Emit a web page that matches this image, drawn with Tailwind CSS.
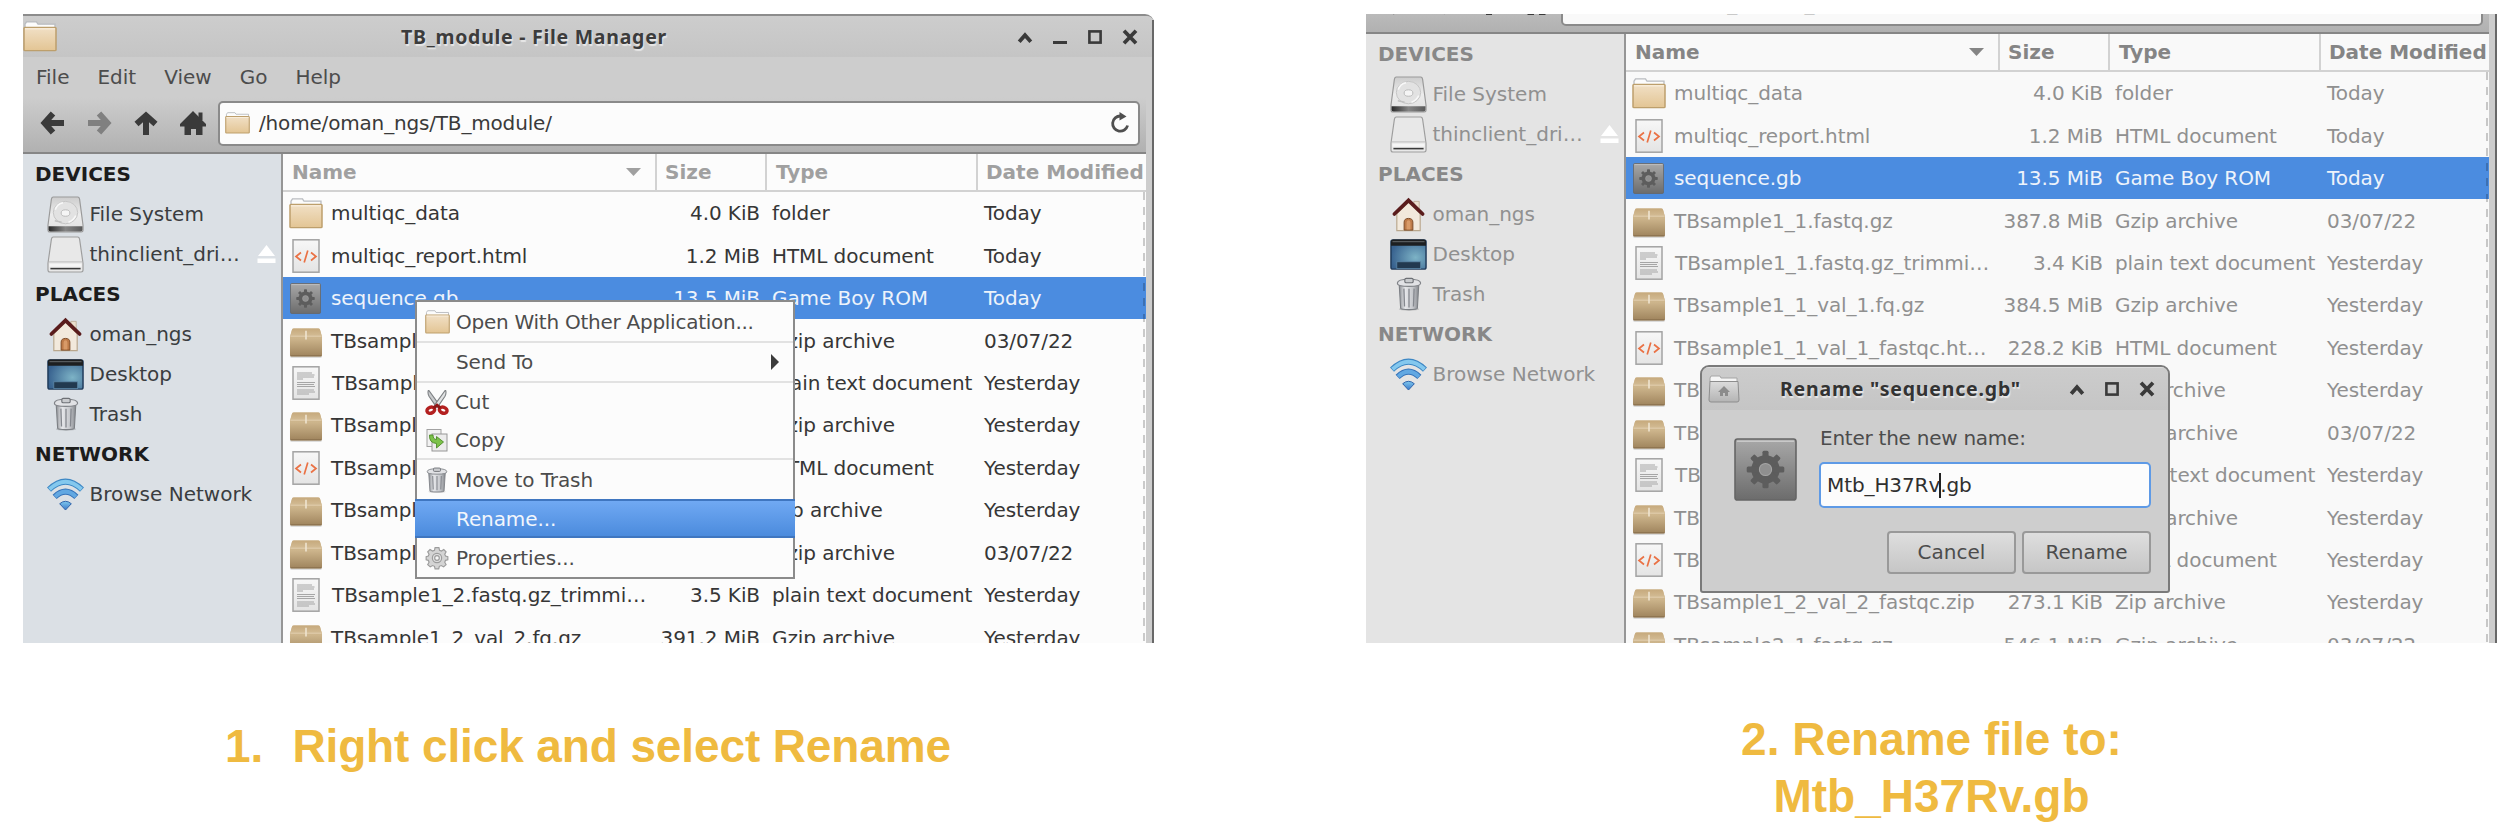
<!DOCTYPE html>
<html lang="en">
<head>
<meta charset="utf-8">
<title>Rename a file</title>
<script src="https://cdn.jsdelivr.net/npm/@tailwindcss/browser@4"></script>
</head>
<body class="bg-white w-[2498px] h-[828px] overflow-hidden">

<svg class="absolute w-0 h-0" aria-hidden="true">
  <defs>
    <linearGradient id="g-folder" x1="0" y1="0" x2="0" y2="1"><stop offset="0" stop-color="#f1e0c6"/><stop offset="1" stop-color="#e3c594"/></linearGradient>
    <linearGradient id="g-box" x1="0" y1="0" x2="0" y2="1"><stop offset="0" stop-color="#cfb78e"/><stop offset=".35" stop-color="#cdb58c"/><stop offset="1" stop-color="#9e835c"/></linearGradient>
    <linearGradient id="g-lid" x1="0" y1="0" x2="0" y2="1"><stop offset="0" stop-color="#c6a97c"/><stop offset="1" stop-color="#d3bc95"/></linearGradient>
    <linearGradient id="g-metal" x1="0" y1="0" x2="0" y2="1"><stop offset="0" stop-color="#a8a8a8"/><stop offset="1" stop-color="#6c6c6c"/></linearGradient>
    <linearGradient id="g-page" x1="0" y1="0" x2="0" y2="1"><stop offset="0" stop-color="#f7f7f7"/><stop offset="1" stop-color="#e4e4e4"/></linearGradient>
    <linearGradient id="g-drive" x1="0" y1="0" x2="0" y2="1"><stop offset="0" stop-color="#cdcdcd"/><stop offset=".5" stop-color="#ececec"/><stop offset="1" stop-color="#e0e0e0"/></linearGradient>
    <linearGradient id="g-driveface" x1="0" y1="0" x2="1" y2="0"><stop offset="0" stop-color="#2a2a2a"/><stop offset=".5" stop-color="#858585"/><stop offset="1" stop-color="#5a5a5a"/></linearGradient>
    <radialGradient id="g-desk" cx=".7" cy=".6" r=".7"><stop offset="0" stop-color="#7db3c6"/><stop offset="1" stop-color="#38628f"/></radialGradient>
    <linearGradient id="g-can" x1="0" y1="0" x2="1" y2="0"><stop offset="0" stop-color="#8f9297"/><stop offset=".3" stop-color="#e6e7ea"/><stop offset=".7" stop-color="#c5c7cb"/><stop offset="1" stop-color="#85888d"/></linearGradient>
    <linearGradient id="g-wifi" x1="0" y1="0" x2="0" y2="1"><stop offset="0" stop-color="#7fc8ee"/><stop offset="1" stop-color="#3a78c8"/></linearGradient>
    <linearGradient id="g-grey" x1="0" y1="0" x2="0" y2="1"><stop offset="0" stop-color="#dcdcdc"/><stop offset="1" stop-color="#b4b4b4"/></linearGradient>

    <symbol id="folder" viewBox="0 0 34 34" preserveAspectRatio="none">
      <path d="M2 9V3.500L3.500 1h10L15 3.500h17V9z" fill="#fcfcfc" stroke="#b9bcc0" stroke-width="1.300"/>
      <rect x="1" y="7" width="32" height="25.500" rx="1" fill="url(#g-folder)" stroke="#bd9f6c" stroke-width="1.500"/>
      <path d="M2 8.600h30" stroke="#f9efdf" stroke-width="1.200"/>
    </symbol>
    <symbol id="homefolder" viewBox="0 0 32 28">
      <path d="M2 7V3L3 1h9l1 2h16v5z" fill="#f5f5f5" stroke="#a5a5a5"/>
      <path d="M2 6.500h28L31 25q0 2-2 2H3q-2 0-2-2z" fill="url(#g-grey)" stroke="#8d8d8d"/>
      <path d="M16 11l6 6h-2v4h-3v-3h-2v3h-3v-4h-2z" fill="#8c8c8c"/>
    </symbol>
    <symbol id="html" viewBox="0 0 34 34">
      <rect x="4" y=".8" width="26" height="32.400" fill="url(#g-page)" stroke="#a3a3a3" stroke-width="1.500"/>
      <path d="M12 13.500l-5 4 5 4M22 13.500l5 4-5 4M18.800 11.500l-3.600 12" fill="none" stroke="#ea7144" stroke-width="1.700"/>
    </symbol>
    <symbol id="text" viewBox="0 0 34 34">
      <rect x="4" y=".8" width="26" height="32.400" fill="url(#g-page)" stroke="#a3a3a3" stroke-width="1.500"/>
      <path d="M8 7h15M8 9h17.500M8 11h17M8 13h6M8 16.500h18M8 18.500h17M8 20.500h18M8 24h17M8 26h18M8 28h12" stroke="#a6a6a6" stroke-width="1.100"/>
    </symbol>
    <symbol id="gear" viewBox="0 0 62 62" preserveAspectRatio="none">
      <rect x="1" y="1" width="60" height="60" rx="2.500" fill="url(#g-metal)" stroke="#666" stroke-width="1.600"/>
      <path d="M3 3.200h56" stroke="#c9c9c9" stroke-width="1.400"/>
      <g fill="#5d5d5d">
        <circle cx="31" cy="31" r="14"/>
        <rect x="28" y="12.500" width="6" height="37" rx="1.500"/><rect x="28" y="12.500" width="6" height="37" rx="1.500" transform="rotate(45 31 31)"/><rect x="28" y="12.500" width="6" height="37" rx="1.500" transform="rotate(90 31 31)"/><rect x="28" y="12.500" width="6" height="37" rx="1.500" transform="rotate(135 31 31)"/>
      </g>
      <circle cx="31" cy="31" r="6" fill="#8f8f8f" stroke="#a5a5a5" stroke-width="1"/>
    </symbol>
    <symbol id="box" viewBox="0 0 34 34">
      <rect x=".5" y="30" width="33" height="3" rx="1.500" fill="#000" opacity=".12"/>
      <path d="M4.500 2.500h25q1.500 0 2 1.500L33.500 11V30q0 1.500-1.500 1.500H2Q.5 31.500.5 30V11L2.500 4q.5-1.500 2-1.500z" fill="url(#g-box)"/>
      <path d="M4.500 2.500h25q1.500 0 2 1.500l1.800 6.500H.7L2.500 4q.5-1.500 2-1.500z" fill="url(#g-lid)"/>
      <path d="M1 10.500h32" stroke="#e2d0b0" stroke-width="1"/>
      <path d="M17 5v9" stroke="#f0e6d2" stroke-width="1.600"/>
      <path d="M1 30.600h32" stroke="#8d7350" stroke-width="1.200"/>
    </symbol>
    <symbol id="drive" viewBox="0 0 38 38">
      <path d="M4.500 3.500q.3-2.500 2-2.500h25q1.700 0 2 2.500L37 30v5q0 2-2 2H3q-2 0-2-2v-5z" fill="url(#g-drive)" stroke="#9a9a9a" stroke-width="1.200"/>
      <path d="M1.600 31h34.800v3.500q0 2-2 2H3.600q-2 0-2-2z" fill="url(#g-driveface)"/>
      <ellipse cx="19" cy="17" rx="12.500" ry="11.500" fill="#e2e2e2" stroke="#c4c4c4"/>
      <path d="M8.500 14q2-6 8-7M29.500 20q-2 5-7.500 7" fill="none" stroke="#f8f8f8" stroke-width="1.600"/>
      <ellipse cx="19" cy="17.500" rx="4.500" ry="3.300" fill="#f5f5f5" stroke="#b9b9b9"/>
      <path d="M8 25.500l7 1.500" stroke="#c0c0c0" stroke-width="1.600"/>
    </symbol>
    <symbol id="usb" viewBox="0 0 38 38">
      <path d="M4.500 3.500q.3-2.500 2-2.500h25q1.700 0 2 2.500L37 28v7q0 2-2 2H3q-2 0-2-2v-7z" fill="#e8e8e8" stroke="#9e9e9e" stroke-width="1.200"/>
      <path d="M2 26.500h34" stroke="#c6c6c6" stroke-width="1.200"/>
      <path d="M2.500 28.500h33v3h-33z" fill="#f6f6f6"/>
      <path d="M3.500 33.500h31" stroke="#3a3a3a" stroke-width="1.600"/>
    </symbol>
    <symbol id="eject" viewBox="0 0 19 19"><path d="M9.500 0L18 11H1zM.5 13.500h18v4.500H.5z" fill="#fff"/></symbol>
    <symbol id="house" viewBox="0 0 36 38">
      <path d="M23.500 5.500h5.500V16h-5.500z" fill="#eadfce" stroke="#b7a68e" stroke-width=".8"/>
      <path d="M6 18L18 6.500 30 18v17.500H6z" fill="#f2e9dc" stroke="#b9a78d" stroke-width="1.200"/>
      <path d="M3.500 18.500L18 4.500l14.500 14" fill="none" stroke="#5a1c1c" stroke-width="3.800" stroke-linecap="round"/>
      <path d="M13.500 35V27q0-4 4.500-4t4.500 4v8z" fill="#bd7a48" stroke="#7c4a26"/>
      <path d="M16 34.500v-7q0-2.500 2-2.500t2 2.500v7z" fill="#d89a68"/>
    </symbol>
    <symbol id="desktop" viewBox="0 0 38 38">
      <rect x="1" y="4" width="36" height="30" rx="2" fill="url(#g-desk)" stroke="#1f3a5a" stroke-width="1.500"/>
      <path d="M1 6q0-2.500 2.500-2.500h31Q37 3.500 37 6v4H1z" fill="#1d1f20"/>
      <path d="M2.500 5.800h33" stroke="#565a5c" stroke-width="1.200"/>
      <rect x="7" y="26.500" width="24.500" height="7" fill="#22394f" stroke="#5d87a8" stroke-width=".8"/>
    </symbol>
    <symbol id="trash" viewBox="0 0 28 38" preserveAspectRatio="none">
      <ellipse cx="14" cy="36" rx="11" ry="1.800" fill="#000" opacity=".15"/>
      <path d="M3.500 9h21L23 35q0 1.500-9 1.500T5 35z" fill="url(#g-can)" stroke="#7d8085" stroke-width="1.200"/>
      <path d="M8.500 13l.7 20M14 13v21M19.500 13l-.7 20" stroke="#85888e" stroke-width="1.400"/>
      <path d="M1.500 7Q1.500 2.500 14 2.500T26.500 7q0 3.500-12.500 3.500T1.500 7z" fill="#e1e2e5" stroke="#808388" stroke-width="1.200"/>
      <rect x="9.500" y="1.500" width="9" height="5" rx="1.500" fill="#c9cbce" stroke="#6d7075" stroke-width="1.200"/>
    </symbol>
    <symbol id="wifi" viewBox="0 0 38 34">
      <g fill="none">
        <path d="M2 12Q19-4.500 36 12" stroke="#3d87c4" stroke-width="6"/>
        <path d="M2.500 11.600Q19-4 35.500 11.600" stroke="#84c8ee" stroke-width="4"/>
        <path d="M7.800 19.500Q19 8.500 30.200 19.500" stroke="#3572b8" stroke-width="6"/>
        <path d="M8.300 19.100Q19 9 29.700 19.100" stroke="#62a8e2" stroke-width="4"/>
      </g>
      <path d="M13 26.500q6-5 12 0l-6 6.500z" fill="url(#g-wifi)" stroke="#2e62a8"/>
    </symbol>
    <symbol id="cut" viewBox="0 0 24 24" preserveAspectRatio="none">
      <path d="M3.500 0q-1.200 3 .5 6l7.500 10.500 3-2z" fill="#c9cbcd" stroke="#7d8083" stroke-width="1.100"/>
      <path d="M20.500 0q1.200 3-.5 6l-7.500 10.500-3-2z" fill="#e2e3e4" stroke="#7d8083" stroke-width="1.100"/>
      <g fill="none" stroke="#b32020" stroke-width="3.400"><ellipse cx="5.800" cy="19.300" rx="3.900" ry="2.800" transform="rotate(-18 6 19.300)"/><ellipse cx="18.200" cy="19.300" rx="3.900" ry="2.800" transform="rotate(18 18 19.300)"/></g>
      <path d="M8.500 17.500l3.500-3 3.500 3" fill="none" stroke="#8f1717" stroke-width="2.800"/>
    </symbol>
    <symbol id="copy" viewBox="0 0 24 24">
      <rect x="2" y="1.500" width="14" height="17" fill="#f2f2f2" stroke="#a2a2a2"/>
      <rect x="7" y="6" width="15" height="17" fill="#ececec" stroke="#969696"/>
      <path d="M4.500 7q-.5 8 7 8.500v4.500l7-6-7-5.500v3Q8 11.500 8 7z" fill="#7cc24a" stroke="#4c8a26" stroke-width=".9"/>
    </symbol>
    <symbol id="cog" viewBox="0 0 62 62">
      <g fill="#d4d4d4" stroke="#9c9c9c" stroke-width="3">
        <path d="M26 4h10l1.500 7 5 2 6-4 6 6-3.500 6.500 2 4.500 6 1.500v8l-6 1.500-2 5 3.500 6-6.500 6-6-3.500-5 2-1.500 6.500H26l-1.500-6.500-5-2-6 3.500-6.500-6 3.500-6-2-5L3 35.500v-8L8.500 26l2-4.500L7 15l6-6 6.500 4 5-2z"/>
        <circle cx="31" cy="31" r="12" fill="#e2e2e2"/><circle cx="31" cy="31" r="6" fill="#f7f7f7"/>
      </g>
    </symbol>

    <symbol id="left" viewBox="0 0 24 24"><path d="M13 2.500L4.500 12l8.500 9.500M5 12h19" fill="none" stroke="currentColor" stroke-width="6"/></symbol>
    <symbol id="home" viewBox="0 0 26 24"><path d="M13 0L26 13v2.500h-3.500V24H16v-6h-5v6H4.500v-8.500H0V13z" fill="currentColor"/><path d="M18.500 1.500h4V9h-4z" fill="currentColor"/></symbol>
    <symbol id="reload" viewBox="0 0 20 22"><path d="M10.500 4A7.600 7.600 0 1 0 17.600 13.500" fill="none" stroke="#4f4f4f" stroke-width="2.800"/><path d="M9.500 0v8.500l7-4z" fill="#4f4f4f"/></symbol>
    <symbol id="w-shade" viewBox="0 0 16 16"><path d="M2.200 12.800L8 6.200l5.800 6.600" fill="none" stroke="#3a3a3a" stroke-width="3.800"/></symbol>
    <symbol id="w-min" viewBox="0 0 16 16"><path d="M1 13.500h14" stroke="#3a3a3a" stroke-width="3"/></symbol>
    <symbol id="w-max" viewBox="0 0 16 16"><rect x="2.400" y="2.400" width="11.200" height="11.200" fill="none" stroke="#3a3a3a" stroke-width="2.600"/></symbol>
    <symbol id="w-close" viewBox="0 0 16 16"><path d="M2 1.800l12 12.400M14 1.800L2 14.200" stroke="#3a3a3a" stroke-width="3.800"/></symbol>
  </defs>
</svg>

<main class="relative flex pt-[14px] pl-[23px] gap-[212px] font-['DejaVu_Sans','Liberation_Sans',sans-serif] text-[20px] leading-6 whitespace-nowrap">

  <div class="w-[1131px] shrink-0">
    <div class="relative h-[629px] overflow-hidden">
      <div data-window="active"></div>

      <!-- context menu -->
      <div class="absolute left-[392px] top-[286px] w-[380px] h-[279px] bg-[#fcfcfc] border-2 border-[#8b8b8b] text-[#4c4c4c] tracking-[-0.1px]">
        <div class="h-[41px] flex items-center pl-[8px] gap-[6px] border-b-2 border-[#e2e2e2] tracking-[-0.260px]"><svg class="w-[25px] h-[24px]"><use href="#folder"/></svg>Open With Other Application...</div>
        <div class="h-[40px] flex items-center justify-between pl-[39px] pr-[14px] border-b-2 border-[#e2e2e2]">Send To<svg class="w-[8px] h-[16px]" viewBox="0 0 8 16"><path d="M0 0l8 8-8 8z" fill="#3c3c3c"/></svg></div>
        <div class="h-[38px] flex items-center pl-[8px] gap-[6px]"><svg class="w-[24px] h-[25px]"><use href="#cut"/></svg>Cut</div>
        <div class="h-[39px] flex items-center pl-[8px] gap-[6px] border-b-2 border-[#e2e2e2]"><svg class="w-[24px] h-[24px]"><use href="#copy"/></svg>Copy</div>
        <div class="h-[39px] flex items-center pl-[9px] gap-[7px]"><svg class="w-[22px] h-[26px]"><use href="#trash"/></svg>Move to Trash</div>
        <div class="h-[39px] -mx-[2px] flex items-center pl-[41px] bg-linear-to-b from-[#70a9f3] to-[#4b8bdd] border-y-2 border-[#3f76c0] text-[#f2f6fc]">Rename...</div>
        <div class="h-[39px] flex items-center pl-[8px] gap-[7px]"><svg class="w-[24px] h-[24px]"><use href="#cog"/></svg>Properties...</div>
      </div>
    </div>
    <p class="mt-[74px] ml-[202px] flex gap-[29px] font-['Liberation_Sans',Arial,sans-serif] font-bold text-[46px] leading-[58px] text-[#efba40]"><span>1.</span><span class="tracking-[-0.120px]">Right click and select Rename</span></p>
  </div>

  <div class="w-[1131px] shrink-0">
    <div class="relative h-[629px] overflow-hidden">
      <div class="-mt-[120px]" data-window="inactive"></div>

      <!-- rename dialog -->
      <div class="absolute left-[334px] top-[351px] w-[470px] h-[228px] bg-[#cecece] border-2 border-[#7a7a7a] rounded-t-[9px] rounded-b-[3px] overflow-hidden">
        <div class="h-[43px] flex items-center pl-[6px] pr-[13px] bg-linear-to-b from-[#cccccc] to-[#c5c5c5] border-t border-[#dedede]">
          <svg class="w-[32px] h-[28px]"><use href="#homefolder"/></svg>
          <div class="ml-[40px] font-['Noto_Sans',sans-serif] font-bold text-[19.500px] tracking-[0.800px] text-[#333] [text-shadow:1px_2px_1px_#e8e8e8]">Rename "sequence.gb"</div>
          <div class="ml-auto flex gap-[19px]">
            <svg class="w-4 h-4"><use href="#w-shade"/></svg>
            <svg class="w-4 h-4"><use href="#w-max"/></svg>
            <svg class="w-4 h-4"><use href="#w-close"/></svg>
          </div>
        </div>
        <div class="flex pl-[32px] pr-[17px] pt-[16px]">
          <svg class="mt-[12px] w-[63px] h-[63px] shrink-0"><use href="#gear"/></svg>
          <div class="ml-[22px] flex-1 text-[#4c4c4c]">
            <div class="pl-px tracking-[-0.250px]">Enter the new name:</div>
            <div class="mt-[12px] h-[46px] flex items-center pl-[6px] bg-[#fcfcfc] border-2 border-[#5e9ae6] rounded-[5px] text-[#2f2f2f] tracking-[-0.100px]">Mtb_H37Rv<span class="-mx-px w-[2px] h-[25px] bg-[#222]"></span>.gb</div>
            <div class="mt-[23px] flex justify-end gap-[6px]">
              <div class="w-[129px] h-[43px] flex items-center justify-center pb-[2px] rounded-[4px] border-2 border-[#999] bg-linear-to-b from-[#dedede] to-[#c6c6c6]">Cancel</div>
              <div class="w-[129px] h-[43px] flex items-center justify-center pb-[2px] rounded-[4px] border-2 border-[#999] bg-linear-to-b from-[#dedede] to-[#c6c6c6]">Rename</div>
            </div>
          </div>
        </div>
      </div>
    </div>
    <p class="mt-[68px] text-center font-['Liberation_Sans',Arial,sans-serif] font-bold text-[46px] leading-[57px] text-[#efba40]">2. Rename file to:<br>Mtb_H37Rv.gb</p>
  </div>
</main>

<script>
const files = [
  ['folder', 'multiqc_data', '4.0 KiB', 'folder', 'Today'],
  ['html', 'multiqc_report.html', '1.2 MiB', 'HTML document', 'Today'],
  ['gear', 'sequence.gb', '13.5 MiB', 'Game Boy ROM', 'Today'],
  ['box', 'TBsample1_1.fastq.gz', '387.8 MiB', 'Gzip archive', '03/07/22'],
  ['text', 'TBsample1_1.fastq.gz_trimmi…', '3.4 KiB', 'plain text document', 'Yesterday'],
  ['box', 'TBsample1_1_val_1.fq.gz', '384.5 MiB', 'Gzip archive', 'Yesterday'],
  ['html', 'TBsample1_1_val_1_fastqc.ht…', '228.2 KiB', 'HTML document', 'Yesterday'],
  ['box', 'TBsample1_1_val_1_fastqc.zip', '273.1 KiB', 'Zip archive', 'Yesterday'],
  ['box', 'TBsample1_2.fastq.gz', '391.2 MiB', 'Gzip archive', '03/07/22'],
  ['text', 'TBsample1_2.fastq.gz_trimmi…', '3.5 KiB', 'plain text document', 'Yesterday'],
  ['box', 'TBsample1_2_val_2.fq.gz', '391.2 MiB', 'Gzip archive', 'Yesterday'],
  ['html', 'TBsample1_2_val_2_fastqc.ht…', '228.2 KiB', 'HTML document', 'Yesterday'],
  ['box', 'TBsample1_2_val_2_fastqc.zip', '273.1 KiB', 'Zip archive', 'Yesterday'],
  ['box', 'TBsample2_1.fastq.gz', '546.1 MiB', 'Gzip archive', '03/07/22'],
];
const places = [
  [null, 'DEVICES'], ['drive', 'File System'], ['usb', 'thinclient_dri…'],
  [null, 'PLACES'], ['house', 'oman_ngs'], ['desktop', 'Desktop'], ['trash', 'Trash'],
  [null, 'NETWORK'], ['wifi', 'Browse Network'],
];
const iconSize = {
  folder: 'w-[34px] h-[31px]', html: 'w-[34px] h-[34px]', text: 'w-[34px] h-[34px]',
  gear: 'w-[31px] h-[31px] mx-[1.500px]', box: 'w-[34px] h-[33px] mt-[3px]',
};
const placeSize = { trash: 'w-[26px] h-[34px] mx-[5.500px]', wifi: 'w-[37px] h-[33px]' };

function row([icon, name, size, type, date], theme) {
  const selected = icon === 'gear';
  return `<div class="h-[42.450px] flex items-center tracking-[-0.080px] ${selected ? 'bg-[#4b8ce0] text-[#edf3fb]' : theme.row}">
    <div class="w-[42px] pl-[5.500px] flex items-center"><svg class="${iconSize[icon]}"><use href="#${icon}"/></svg></div>
    <div class="w-[331px] pl-[6px]">${icon === 'text' ? '<span class="pl-px">' + name + '</span>' : name}</div>
    <div class="w-[104px] flex justify-end">${size}</div>
    <div class="w-[212px] pl-[12px]">${type}</div>
    <div class="pl-[12px]">${date}</div>
  </div>`;
}
function place([icon, label], theme) {
  if (!icon) return `<div class="h-10 flex items-center pl-[12px] font-bold ${theme.heading}">${label}</div>`;
  return `<div class="h-10 flex items-center pl-[24px] pr-[5px] gap-[5.500px] ${theme.place}">
    <svg class="${placeSize[icon] || 'w-[37px] h-[37px]'}"><use href="#${icon}"/></svg>${label}
    ${icon === 'usb' ? '<svg class="ml-auto w-[19px] h-[19px]"><use href="#eject"/></svg>' : ''}</div>`;
}
function fileManager(theme) {
  return `<div class="relative h-[749px] pr-[8px] bg-[#cdcdcd] border-t-2 border-t-[#8c8c8c] rounded-tr-[9px]">
    <div class="h-[41px] -mr-[8px] pr-[16px] flex items-center bg-linear-to-b from-[#cdcdcd] to-[#c5c5c5] rounded-tr-[7px]">
      <svg class="w-[34px] h-[31px]"><use href="#folder"/></svg>
      <div class="ml-[344px] font-['Noto_Sans',sans-serif] font-bold text-[19.500px] tracking-[0.730px] text-[#3c3c3c] [text-shadow:1px_2px_1px_#e8e8e8]">TB_module - File Manager</div>
      <div class="ml-auto flex gap-[19px]">
        <svg class="w-4 h-4"><use href="#w-shade"/></svg><svg class="w-4 h-4"><use href="#w-min"/></svg>
        <svg class="w-4 h-4"><use href="#w-max"/></svg><svg class="w-4 h-4"><use href="#w-close"/></svg>
      </div>
    </div>
    <div class="h-[40px] flex items-center gap-[28px] pl-[13px] text-[#4c4c4c]"><span>File</span><span>Edit</span><span>View</span><span>Go</span><span>Help</span></div>
    <div class="h-[57px] flex items-center pl-[17px] pr-[6px] pb-[3px] bg-linear-to-b from-[#cdcdcd] to-[#b1b1b1] border-b-2 border-[#868686] text-[#3a3a3a]">
      <svg class="w-[24px] h-[24px]"><use href="#left"/></svg>
      <svg class="ml-[24px] w-[24px] h-[24px] rotate-180 text-[#808080]"><use href="#left"/></svg>
      <svg class="ml-[22px] w-[24px] h-[24px] rotate-90"><use href="#left"/></svg>
      <svg class="ml-[22px] w-[26px] h-[24px]"><use href="#home"/></svg>
      <div class="ml-[12px] h-[45px] flex-1 flex items-center pl-[5px] pr-[8px] rounded-[5px] border-2 border-[#8a8a8a] ${theme.entry}">
        <svg class="w-[25px] h-[22px]"><use href="#folder"/></svg>
        <span class="ml-[9px] tracking-[-0.170px]">/home/oman_ngs/TB_module/</span>
        <svg class="ml-auto w-[20px] h-[22px]"><use href="#reload"/></svg>
      </div>
    </div>
    <div class="h-[609px] flex overflow-hidden">
      <div class="w-[260px] shrink-0 border-r-2 border-[#969696] ${theme.sidebar}">${places.map(p => place(p, theme)).join('')}</div>
      <div class="relative flex-1 overflow-hidden ${theme.list}">
        <div class="h-[38px] flex items-center border-b-2 border-[#d2d2d2] font-bold ${theme.header}">
          <div class="w-[374px] h-full flex items-center justify-between pl-[9px] pr-[14px] border-r-2 border-[#d2d2d2]">Name<svg class="w-[15px] h-[8px]" viewBox="0 0 15 8"><path d="M0 0h15L7.500 8z" fill="currentColor"/></svg></div>
          <div class="w-[110px] h-full flex items-center pl-[8px] border-r-2 border-[#d2d2d2]">Size</div>
          <div class="w-[211px] h-full flex items-center pl-[9px] border-r-2 border-[#d2d2d2]">Type</div>
          <div class="pl-[8px]">Date Modified</div>
        </div>
        ${files.map(f => row(f, theme)).join('')}
        <div class="absolute right-[1px] top-[38px] bottom-0 w-[2px] bg-[repeating-linear-gradient(to_bottom,rgba(0,0,0,0.2)_0_8px,transparent_8px_15.200px)]"></div>
      </div>
    </div>
    <div class="absolute right-0 top-[4px] bottom-0 w-[2px] bg-[#686868]"></div>
  </div>`;
}
const themes = {
  active: { row: 'text-[#363636]', heading: 'text-[#1c1c1c]', place: 'text-[#3a3d40]', sidebar: 'bg-[#dbe0e5]', list: 'bg-[#fcfcfc]', header: 'text-[#a0a0a0]', entry: 'bg-[#fcfcfc]' },
  inactive: { row: 'text-[#909090]', heading: 'text-[#888888]', place: 'text-[#909090]', sidebar: 'bg-[#e4e4e4]', list: 'bg-[#f9f9f9]', header: 'text-[#858585]', entry: 'bg-[#f9f9f9]' },
};
document.querySelectorAll('[data-window]').forEach(el => { el.innerHTML = fileManager(themes[el.dataset.window]); });
</script>
</body>
</html>
